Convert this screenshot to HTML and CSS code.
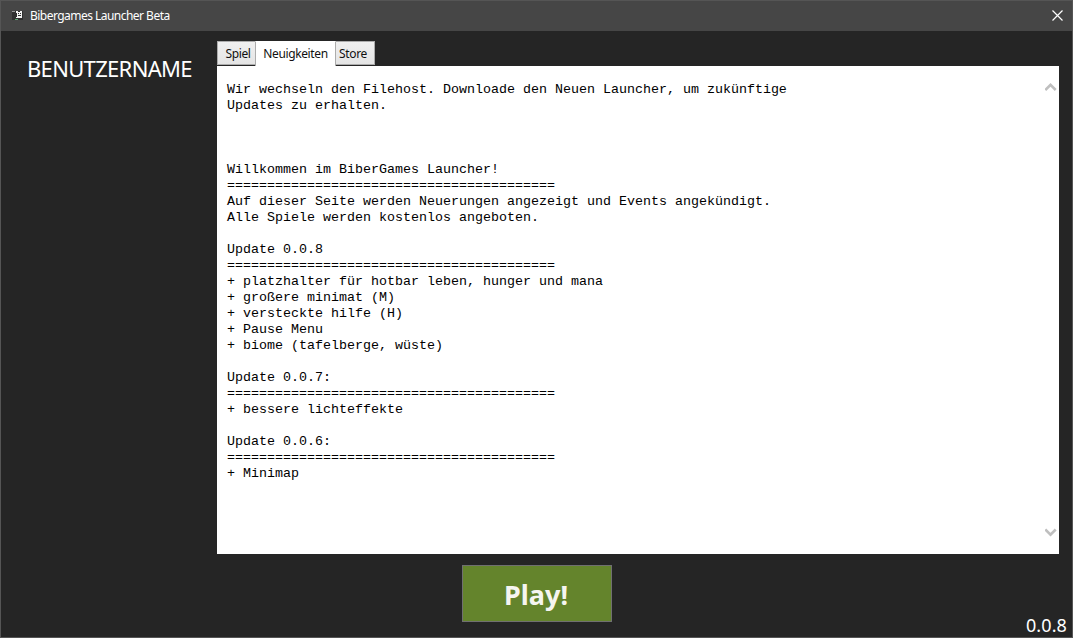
FILE: index.html
```html
<!DOCTYPE html>
<html lang="de">
<head>
<meta charset="utf-8">
<title>Bibergames Launcher Beta</title>
<link rel="stylesheet" href="styles.css">
</head>
<body>
<div class="window">
  <header class="titlebar">
    <svg class="app-icon" width="12" height="12" viewBox="0 0 12 12" shape-rendering="crispEdges">
      <path fill="#303030" d="M0 1h11v9H0z"/>
      <path fill="#999" d="M0 1h3v1H0z"/>
      <path fill="#f2f2f2" d="M4 1h2v1h2V1h2v7H4V7h1V3H4z"/>
      <path fill="#333" d="M6 3h1v1H6zM8 3h1v1H8zM6 5h3v1H6z"/>
      <path fill="#60a873" d="M3 9h3v1H3z"/>
    </svg>
    <h1 class="title">Bibergames Launcher Beta</h1>
    <button class="close" aria-label="Schließen">
      <svg width="11" height="11" viewBox="0 0 11 11"><path d="M.5.5l10 10M10.500.5L.5 10.500" stroke="#fff" stroke-width="1.200"/></svg>
    </button>
  </header>
  <div class="body">
    <aside class="side"><div class="user">BENUTZERNAME</div></aside>
    <main class="main">
      <nav class="tabs">
        <div class="tab tab-game">Spiel</div>
        <div class="tab tab-active">Neuigkeiten</div>
        <div class="tab tab-store">Store</div>
      </nav>
      <section class="panel">
<pre class="news">Wir wechseln den Filehost. Downloade den Neuen Launcher, um zukünftige
Updates zu erhalten.



Willkommen im BiberGames Launcher!
=========================================
Auf dieser Seite werden Neuerungen angezeigt und Events angekündigt.
Alle Spiele werden kostenlos angeboten.

Update 0.0.8
=========================================
+ platzhalter für hotbar leben, hunger und mana
+ großere minimat (M)
+ versteckte hilfe (H)
+ Pause Menu
+ biome (tafelberge, wüste)

Update 0.0.7:
=========================================
+ bessere lichteffekte

Update 0.0.6:
=========================================
+ Minimap</pre>
        <div class="scroll">
          <svg width="12" height="10" viewBox="0 0 12 10"><path d="M.3 8L5.500 2.800 10.700 8" fill="none" stroke="#bfbfbf" stroke-width="2.600"/></svg>
          <svg width="12" height="10" viewBox="0 0 12 10"><path d="M.3 1.500L5.500 6.700 10.700 1.500" fill="none" stroke="#bfbfbf" stroke-width="2.600"/></svg>
        </div>
      </section>
    </main>
  </div>
  <footer class="footer">
    <button class="play"><span>Play!</span></button>
    <div class="version">0.0.8</div>
  </footer>
</div>
</body>
</html>
```
FILE: styles.css
```css
* { box-sizing: border-box; }
body { margin: 0; overflow: hidden; font-family: "Noto Sans", "Open Sans", sans-serif; }
button { font-family: inherit; padding: 0; border: 0; }
.window { width: 1073px; height: 638px; display: flex; flex-direction: column; background: #252525; border: 1px solid #555; }
.titlebar { height: 30px; flex: none; display: flex; align-items: center; background: #464646; padding: 0 9px 0 11px; }
.app-icon { margin-right: 6px; flex: none; }
.title { margin: 0; font-size: 12px; line-height: 16px; font-weight: 400; letter-spacing: -0.53px; color: #fff; white-space: nowrap; }
.close { margin: 0 0 1px auto; display: flex; background: none; }
.body { display: flex; height: 523px; flex: none; padding: 10px 13px 0 0; }
.side { width: 216px; flex: none; padding: 11px 0 0 26px; }
.user { font-size: 22px; line-height: 32px; letter-spacing: -0.68px; color: #fff; white-space: nowrap; }
.main { flex: 1; display: flex; flex-direction: column; }
.tabs { display: flex; height: 25px; flex: none; }
.tab { height: 24px; border: 1px solid #acacac; background: linear-gradient(#f0f0f0, #e5e5e5); font-size: 12px; line-height: 23px; letter-spacing: -0.38px; text-align: center; color: #111; white-space: nowrap; }
.tab-game { width: 38px; border-right: 0; padding-left: 3px; }
.tab-active { width: 81px; height: 25px; background: #fff; border-top-color: #fff; border-bottom: 0; }
.tab-store { width: 39px; border-left: 0; padding-right: 4px; }
.panel { flex: 1; display: flex; justify-content: space-between; background: #fff; padding: 16px 2px 16px 10px; }
.news { margin: 0; font: 13.333px/16px "Liberation Mono", "Courier New", monospace; color: #000; }
.scroll { display: flex; flex-direction: column; justify-content: space-between; }
.footer { flex: 1; display: grid; grid-template-columns: 461px 150px 1fr; padding-top: 11px; }
.play { height: 57px; background: #64842c; border: 1px solid #707070; color: #f5f5f0; font-size: 27px; font-weight: 700; line-height: 36px; letter-spacing: 0; grid-column: 2; padding: 2px 2px 0 0; }
.version { align-self: end; justify-self: end; padding: 0 5px 0 0; font-size: 18px; line-height: 24px; letter-spacing: 0.1px; color: #fff; }
```
